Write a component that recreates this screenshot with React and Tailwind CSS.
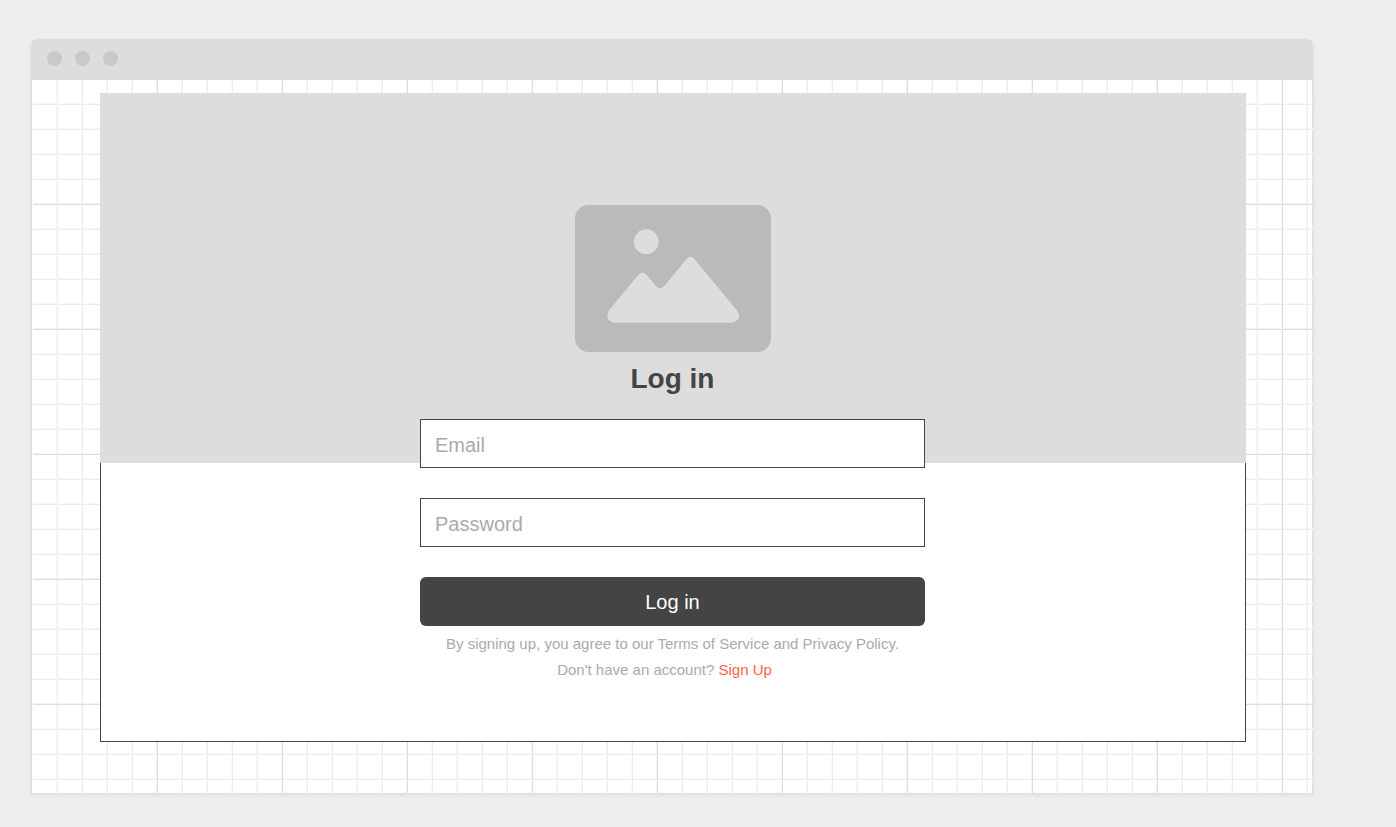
const gridLines = [
  'bg-[linear-gradient(to_right,transparent_123px,#f3f3f3_123px,#f3f3f3_124px,#dddddd_124px),linear-gradient(to_bottom,transparent_123px,#f3f3f3_123px,#f3f3f3_124px,#dddddd_124px),linear-gradient(to_right,transparent_23px,#f8f8f8_23px,#f8f8f8_24px,#ececec_24px),linear-gradient(to_bottom,transparent_23px,#f8f8f8_23px,#f8f8f8_24px,#ececec_24px)]',
  'bg-[size:125px_125px,125px_125px,25px_25px,25px_25px]',
].join(' ');

function TitleBar() {
  return (
    <header className="flex h-[41px] items-start gap-[13px] rounded-t-md bg-[#dddddd] px-4 pt-3">
      <span className="size-[15px] rounded-full bg-[#c9c9c9]" />
      <span className="size-[15px] rounded-full bg-[#c9c9c9]" />
      <span className="size-[15px] rounded-full bg-[#c9c9c9]" />
    </header>
  );
}

function PictureIcon() {
  return (
    <svg width="196" height="147" viewBox="0 0 196 147" aria-hidden="true">
      <rect width="196" height="147" rx="13.5" fill="#bababa" />
      <circle cx="71.2" cy="36.7" r="12.4" fill="#dddddd" />
      <path
        fill="#dddddd"
        d="M34.1 105.2 L63.6 69.7 Q67.6 65.3 71.6 69.7 L80.7 80.8 Q85 85.8 89.5 80.8 L111.3 54.2 Q115.5 49.3 119.7 54.2 L162.3 105.8 C166.3 111 162.8 117.7 156.8 117.7 L39.8 117.7 C33.3 117.7 30.1 110.5 34.1 105.2 Z"
      />
    </svg>
  );
}

function Field({ label, type, autoComplete }) {
  return (
    <input
      type={type}
      aria-label={label}
      placeholder={label}
      autoComplete={autoComplete}
      className="block h-[49px] w-full border border-[#444444] bg-white px-3.5 pt-1 text-[20px] text-[#444444] outline-none placeholder:text-[#aaaaaa]"
    />
  );
}

function LoginForm() {
  return (
    <form
      className="flex w-full max-w-[505px] flex-col items-center"
      onSubmit={(event) => event.preventDefault()}
    >
      <PictureIcon />
      <h1 className="mt-[9px] mb-[22px] text-[28px] leading-9 font-bold">Log in</h1>
      <div className="flex w-full flex-col gap-[30px]">
        <Field label="Email" type="email" autoComplete="email" />
        <Field label="Password" type="password" autoComplete="current-password" />
        <button type="submit" className="h-[49px] w-full rounded-md bg-[#444444] text-[20px] text-white">
          Log in
        </button>
      </div>
      <div className="mt-[5px] text-center text-[15px] leading-[26px] text-[#aaaaaa]">
        <p>By signing up, you agree to our Terms of Service and Privacy Policy.</p>
        <p className="pr-4">
          Don't have an account? <a href="#signup" className="text-[#ff6347]">Sign Up</a>
        </p>
      </div>
    </form>
  );
}

export default function App() {
  return (
    <div className="flex min-h-screen flex-col bg-[#eeeeee] pt-[39px] pr-[83px] pb-[33px] pl-[31px] font-['Liberation_Sans',Arial,sans-serif] text-[#444444]">
      <div className="flex flex-1 flex-col rounded-t-md shadow-[0_1px_4px_rgba(0,0,0,0.07)]">
        <TitleBar />
        <main className="flex flex-1 flex-col border-x border-b border-[#dddddd] bg-white">
          <div className={`-mr-px -mb-px ml-px flex flex-1 flex-col pt-[13px] pr-[67px] pb-[52px] pl-[67px] ${gridLines}`}>
            <section className="grid flex-1">
              <div className="col-start-1 row-start-1 flex flex-col">
                <div className="h-[370px] bg-[#dddddd]" />
                <div className="flex-1 border border-t-0 border-[#444444] bg-white" />
              </div>
              <div className="col-start-1 row-start-1 flex flex-col items-center pt-28 pr-px pb-14">
                <LoginForm />
              </div>
            </section>
          </div>
        </main>
      </div>
    </div>
  );
}
